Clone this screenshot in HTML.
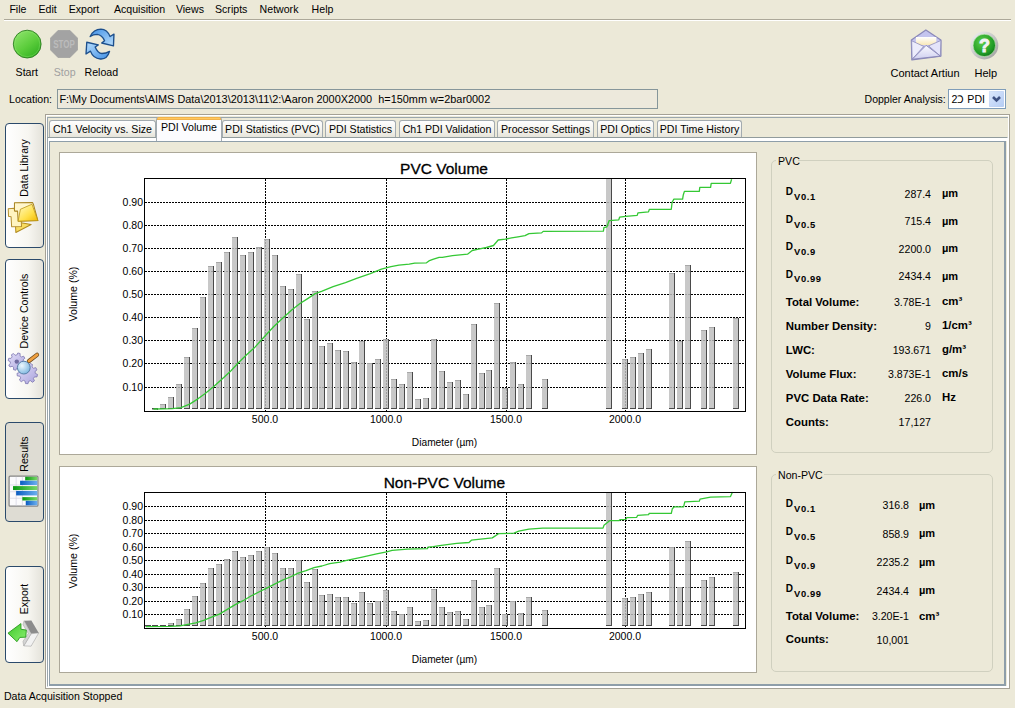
<!DOCTYPE html><html><head><meta charset="utf-8"><style>
html,body{margin:0;padding:0}
body{width:1015px;height:708px;overflow:hidden;position:relative;background:#ece9d8;font-family:"Liberation Sans", sans-serif}
.t{position:absolute;white-space:pre;line-height:1;font-family:"Liberation Sans", sans-serif}
.b{position:absolute}
</style></head><body>
<div class="t" style="left:9.40px;top:3.83px;font-size:10.6px;font-weight:normal;color:#000;">File</div>
<div class="t" style="left:38.50px;top:3.83px;font-size:10.6px;font-weight:normal;color:#000;">Edit</div>
<div class="t" style="left:68.70px;top:3.83px;font-size:10.6px;font-weight:normal;color:#000;">Export</div>
<div class="t" style="left:113.90px;top:3.83px;font-size:10.6px;font-weight:normal;color:#000;">Acquisition</div>
<div class="t" style="left:175.90px;top:3.83px;font-size:10.6px;font-weight:normal;color:#000;">Views</div>
<div class="t" style="left:215.00px;top:3.83px;font-size:10.6px;font-weight:normal;color:#000;">Scripts</div>
<div class="t" style="left:259.60px;top:3.83px;font-size:10.6px;font-weight:normal;color:#000;">Network</div>
<div class="t" style="left:311.60px;top:3.83px;font-size:10.6px;font-weight:normal;color:#000;">Help</div>
<div class="b" style="left:4px;top:19px;width:1007px;height:1px;background:#aca899"></div>
<div class="b" style="left:4px;top:20px;width:1007px;height:1px;background:#fff"></div>
<svg class="b" style="left:11px;top:28px" width="32" height="32" viewBox="0 0 32 32">
<defs><linearGradient id="gs" x1="0.2" y1="0.1" x2="0.8" y2="0.9"><stop offset="0" stop-color="#86e064"/><stop offset="0.55" stop-color="#5ccd3c"/><stop offset="1" stop-color="#36b424"/></linearGradient></defs>
<circle cx="16.2" cy="16.1" r="13.9" fill="url(#gs)" stroke="#2c7c20" stroke-width="0.9"/>
<circle cx="16.2" cy="16.1" r="12.6" fill="none" stroke="#9aea80" stroke-width="0.7" opacity="0.45"/>
</svg>
<svg class="b" style="left:50px;top:30px" width="28" height="28" viewBox="0 0 28 28">
<polygon points="8.2,0.3 19.8,0.3 27.7,8.2 27.7,19.8 19.8,27.7 8.2,27.7 0.3,19.8 0.3,8.2" fill="#a3a3a3" stroke="#9c9c9c" stroke-width="0.6" stroke-linejoin="round"/>
<text x="14" y="17.8" text-anchor="middle" font-family="Liberation Sans" font-weight="bold" font-size="10" fill="#bcbcbc" transform="translate(14 0) scale(0.8 1) translate(-14 0)">STOP</text>
</svg>
<svg class="b" style="left:80px;top:25px" width="45" height="37" viewBox="0 0 861 708">
<defs><linearGradient id="gr1" x1="0" y1="0" x2="1" y2="1"><stop offset="0" stop-color="#3f8fe6"/><stop offset="1" stop-color="#b9defc"/></linearGradient>
<linearGradient id="gr2" x1="0" y1="0" x2="1" y2="1"><stop offset="0" stop-color="#b9defc"/><stop offset="1" stop-color="#3f8fe6"/></linearGradient></defs>
<path d="M195 220 Q260 80 400 80 Q520 85 575 220 L650 175 L640 400 L415 345 L470 300 Q420 190 330 180 Q250 180 195 220 Z" fill="url(#gr1)" stroke="#1d4f8c" stroke-width="26" stroke-linejoin="round"/>
<path d="M565 505 Q520 660 390 650 Q250 640 200 500 L115 555 L130 330 L350 380 L290 420 Q340 540 420 545 Q500 545 565 505 Z" fill="url(#gr2)" stroke="#1d4f8c" stroke-width="26" stroke-linejoin="round"/>
</svg>
<div class="t" style="left:15.60px;top:66.63px;font-size:10.6px;font-weight:normal;color:#000;">Start</div>
<div class="t" style="left:53.80px;top:66.63px;font-size:10.6px;font-weight:normal;color:#a0a0a0;">Stop</div>
<div class="t" style="left:84.50px;top:66.63px;font-size:10.6px;font-weight:normal;color:#000;">Reload</div>
<svg class="b" style="left:906px;top:26px" width="40" height="38" viewBox="0 0 745 708">
<defs><linearGradient id="envb" x1="0" y1="0" x2="0" y2="1"><stop offset="0" stop-color="#fafaff"/><stop offset="1" stop-color="#cfcff0"/></linearGradient>
<linearGradient id="pap" x1="0" y1="0" x2="0" y2="1"><stop offset="0" stop-color="#ffffff"/><stop offset="1" stop-color="#f8e8b8"/></linearGradient></defs>
<polygon points="100,260 370,75 650,260 650,560 110,630" fill="#c4c4ee" stroke="#8a88b8" stroke-width="24" stroke-linejoin="round"/>
<rect x="185" y="205" width="380" height="150" fill="url(#pap)"/>
<polygon points="105,275 330,380 115,620" fill="#ececfc" stroke="#8a88b8" stroke-width="14" stroke-linejoin="round"/>
<polygon points="650,270 420,370 640,560" fill="#e4e4fa" stroke="#8a88b8" stroke-width="14" stroke-linejoin="round"/>
<polygon points="115,620 375,360 640,560" fill="url(#envb)" stroke="#8a88b8" stroke-width="18" stroke-linejoin="round"/>
</svg>
<svg class="b" style="left:969px;top:30px" width="31" height="31" viewBox="0 0 31 31">
<defs><radialGradient id="hg" cx="0.4" cy="0.35" r="0.75"><stop offset="0" stop-color="#5cd04a"/><stop offset="0.7" stop-color="#1f9a26"/><stop offset="1" stop-color="#0b6414"/></radialGradient>
<linearGradient id="hr" x1="0" y1="0" x2="1" y2="1"><stop offset="0" stop-color="#f4f4f4"/><stop offset="1" stop-color="#9c9c9c"/></linearGradient></defs>
<circle cx="15.3" cy="15.4" r="14" fill="url(#hr)"/>
<circle cx="15.3" cy="15.4" r="11.2" fill="url(#hg)" stroke="#c8f0c0" stroke-width="0.6"/>
<text x="15.4" y="21.6" text-anchor="middle" font-family="Liberation Sans" font-weight="bold" font-size="18" fill="#f2f2f2" stroke="#f2f2f2" stroke-width="0.9">?</text>
</svg>
<div class="t" style="left:890.50px;top:67.59px;font-size:11.0px;font-weight:normal;color:#000;">Contact Artiun</div>
<div class="t" style="left:974.50px;top:67.59px;font-size:11.0px;font-weight:normal;color:#000;">Help</div>
<div class="t" style="left:9.00px;top:94.03px;font-size:10.6px;font-weight:normal;color:#000;">Location:</div>
<div class="b" style="left:57px;top:89px;width:601px;height:20px;box-sizing:border-box;border:1px solid #86969a;background:#ede9dc"></div>
<div class="t" style="left:59.40px;top:93.77px;font-size:10.9px;font-weight:normal;color:#000;">F:\My Documents\AIMS Data\2013\2013\11\2:\Aaron 2000X2000&nbsp; h=150mm w=2bar0002</div>
<div class="t" style="left:864.60px;top:94.01px;font-size:10.5px;font-weight:normal;color:#000;">Doppler Analysis:</div>
<div class="b" style="left:948px;top:89px;width:58px;height:20px;box-sizing:border-box;border:1px solid #7f9db9;background:#fff"></div>
<div class="t" style="left:951.50px;top:93.93px;font-size:10.6px;font-weight:normal;color:#000;">2Ↄ PDI</div>
<svg class="b" style="left:989px;top:91px" width="15" height="16" viewBox="0 0 15 16">
<defs><linearGradient id="dd" x1="0" y1="0" x2="1" y2="1"><stop offset="0" stop-color="#dce8fc"/><stop offset="1" stop-color="#b4ccf4"/></linearGradient></defs>
<rect x="0" y="0" width="15" height="16" rx="1.5" fill="url(#dd)" stroke="#c0d0ee" stroke-width="0.6"/>
<path d="M4 6 L7.5 9.5 L11 6" fill="none" stroke="#3f5283" stroke-width="2.6"/>
</svg>
<div class="b" style="left:5px;top:123px;width:39px;height:125px;box-sizing:border-box;border:1px solid #2b4a6b;border-radius:4px;background:linear-gradient(90deg,#ffffff 0%,#f7f6f1 60%,#e4e2da 100%)"></div>
<svg class="b" style="left:4px;top:198px" width="40" height="40" viewBox="0 0 708 708">
<defs><linearGradient id="fd" x1="0" y1="0" x2="1" y2="1"><stop offset="0" stop-color="#fffbc8"/><stop offset="0.6" stop-color="#ffe04a"/><stop offset="1" stop-color="#f0b800"/></linearGradient></defs>
<polygon points="200,420 480,470 210,610" fill="#f8dc60" stroke="#b08a20" stroke-width="18" stroke-linejoin="round"/>
<polygon points="75,190 180,180 190,235 300,235 310,505 135,510 125,330 80,325" fill="#fff4c0" stroke="#b59030" stroke-width="18" stroke-linejoin="round"/>
<polygon points="185,85 505,80 520,110 600,400 250,410 240,230 185,225" fill="#fff6cc" stroke="#a88420" stroke-width="18" stroke-linejoin="round"/>
<polygon points="290,200 495,110 600,400 250,410" fill="url(#fd)" stroke="#b89010" stroke-width="14" stroke-linejoin="round"/>
</svg>
<div class="t" style="left:-35.5px;top:162px;width:120px;height:12px;font-size:10.6px;text-align:center;transform:rotate(-90deg);transform-origin:60px 6px">Data Library</div>
<div class="b" style="left:5px;top:259px;width:39px;height:140px;box-sizing:border-box;border:1px solid #2b4a6b;border-radius:4px;background:linear-gradient(90deg,#ffffff 0%,#f7f6f1 60%,#e4e2da 100%)"></div>
<svg class="b" style="left:6px;top:351px" width="34" height="34" viewBox="0 0 34 34">
<defs><linearGradient id="gg" x1="0" y1="0" x2="1" y2="1"><stop offset="0" stop-color="#e4e0fa"/><stop offset="1" stop-color="#aaa3dc"/></linearGradient>
<radialGradient id="mg" cx="0.35" cy="0.35" r="0.7"><stop offset="0" stop-color="#eef8ff"/><stop offset="1" stop-color="#7fb8e0"/></radialGradient></defs>
<path d="M17.40,10.60 L19.44,11.62 L18.84,13.93 L16.56,13.82 L15.47,15.27 L16.19,17.43 L14.13,18.64 L12.59,16.95 L10.80,17.20 L9.78,19.24 L7.47,18.64 L7.58,16.36 L6.13,15.27 L3.97,15.99 L2.76,13.93 L4.45,12.39 L4.20,10.60 L2.16,9.58 L2.76,7.27 L5.04,7.38 L6.13,5.93 L5.41,3.77 L7.47,2.56 L9.01,4.25 L10.80,4.00 L11.82,1.96 L14.13,2.56 L14.02,4.84 L15.47,5.93 L17.63,5.21 L18.84,7.27 L17.15,8.81 Z" fill="url(#gg)" stroke="#7c76b0" stroke-width="0.8"/>
<circle cx="10.8" cy="10.6" r="2.2" fill="#6f6aa0"/>
<path d="M29.30,22.40 L31.54,23.48 L30.98,25.92 L28.49,25.91 L27.43,27.54 L28.45,29.81 L26.45,31.32 L24.55,29.71 L22.69,30.28 L22.02,32.67 L19.51,32.54 L19.09,30.09 L17.30,29.33 L15.25,30.73 L13.41,29.02 L14.67,26.87 L13.78,25.14 L11.31,24.89 L11.00,22.40 L13.34,21.56 L13.78,19.66 L12.04,17.88 L13.41,15.78 L15.74,16.65 L17.30,15.47 L17.11,12.99 L19.51,12.26 L20.74,14.42 L22.69,14.52 L24.14,12.50 L26.45,13.48 L26.00,15.93 L27.43,17.26 L29.84,16.64 L30.98,18.88 L29.06,20.46 Z" fill="url(#gg)" stroke="#7c76b0" stroke-width="0.8"/>
<line x1="23" y1="10" x2="31" y2="3.8" stroke="#6b4a20" stroke-width="4.2" stroke-linecap="round"/>
<line x1="23" y1="10" x2="31" y2="3.8" stroke="#f0a040" stroke-width="2.8" stroke-linecap="round"/>
<circle cx="17.8" cy="16.6" r="6.4" fill="url(#mg)" stroke="#5a7fa8" stroke-width="1"/>
</svg>
<div class="t" style="left:-35.5px;top:305.4px;width:120px;height:12px;font-size:10.6px;text-align:center;transform:rotate(-90deg);transform-origin:60px 6px">Device Controls</div>
<div class="b" style="left:5px;top:422px;width:39px;height:100px;box-sizing:border-box;border:1px solid #2b4a6b;border-radius:4px;background:#dedcd3"></div>
<svg class="b" style="left:4px;top:470px" width="40" height="40" viewBox="0 0 708 708">
<defs><linearGradient id="rg" x1="0" y1="0" x2="1" y2="0"><stop offset="0" stop-color="#079810"/><stop offset="1" stop-color="#7ad86a"/></linearGradient>
<linearGradient id="rb" x1="0" y1="0" x2="1" y2="0"><stop offset="0" stop-color="#0a5cc0"/><stop offset="1" stop-color="#6cb0f0"/></linearGradient></defs>
<rect x="90" y="110" width="510" height="530" rx="18" fill="#fbfbfd" stroke="#858585" stroke-width="22"/>
<g stroke="#cfcfe0" stroke-width="12"><line x1="215" y1="120" x2="215" y2="630"/><line x1="325" y1="120" x2="325" y2="630"/><line x1="100" y1="265" x2="590" y2="265"/><line x1="100" y1="385" x2="590" y2="385"/><line x1="100" y1="500" x2="590" y2="500"/></g>
<rect x="375" y="120" width="215" height="65" fill="url(#rg)"/>
<rect x="285" y="190" width="305" height="75" fill="url(#rb)"/>
<rect x="160" y="285" width="430" height="70" fill="url(#rg)"/>
<rect x="215" y="370" width="375" height="80" fill="url(#rb)"/>
<rect x="325" y="480" width="265" height="60" fill="url(#rg)"/>
<rect x="385" y="545" width="205" height="80" fill="url(#rb)"/>
</svg>
<div class="t" style="left:-35.5px;top:448.4px;width:120px;height:12px;font-size:10.6px;text-align:center;transform:rotate(-90deg);transform-origin:60px 6px">Results</div>
<div class="b" style="left:5px;top:566px;width:39px;height:97px;box-sizing:border-box;border:1px solid #2b4a6b;border-radius:4px;background:linear-gradient(90deg,#ffffff 0%,#f7f6f1 60%,#e4e2da 100%)"></div>
<svg class="b" style="left:4px;top:612px" width="40" height="40" viewBox="0 0 708 708">
<defs><linearGradient id="eg" x1="0" y1="0" x2="1" y2="1"><stop offset="0" stop-color="#3fc82a"/><stop offset="1" stop-color="#8af070"/></linearGradient></defs>
<polygon points="355,155 485,150 615,370 480,385" fill="#8c8c8c"/>
<polygon points="480,385 615,370 480,605 350,600" fill="#f2f2f2" stroke="#a0a0a0" stroke-width="10"/>
<polygon points="355,155 480,385 350,600 335,520 430,380 335,225" fill="#d4d4d4" stroke="#9a9a9a" stroke-width="8"/>
<polygon points="70,375 300,205 300,305 395,320 385,445 280,450 230,525" fill="url(#eg)" stroke="#2a9a20" stroke-width="16" stroke-linejoin="round"/>
</svg>
<div class="t" style="left:-35.5px;top:592.7px;width:120px;height:12px;font-size:10.6px;text-align:center;transform:rotate(-90deg);transform-origin:60px 6px">Export</div>
<div class="b" style="left:45px;top:114px;width:965px;height:575px;box-sizing:border-box;border:1px solid #a5a195;border-right-color:#a5a195"></div>
<div class="b" style="left:46px;top:115px;width:963px;height:573px;box-sizing:border-box;border:1px solid #ffffff"></div>
<div class="b" style="left:47px;top:117px;width:961px;height:570px;box-sizing:border-box;border-top:1px solid #9aa6ad;border-left:1px solid #9aa6ad"></div>
<div class="b" style="left:47px;top:137px;width:961px;height:550px;box-sizing:border-box;border-top:1px solid #919b9c;border-left:1px solid #9aa6ad;border-right:1px solid #ffffff;border-bottom:1px solid #fff"></div>
<div class="b" style="left:48px;top:138px;width:959px;height:548px;box-sizing:border-box;border-top:3px solid #fff;border-left:1px solid #fff"></div>
<div class="b" style="left:49px;top:141px;width:957px;height:545px;box-sizing:border-box;border:1px solid #8e9ea9;border-right-width:2px;border-bottom-width:2px"></div>
<div class="b" style="left:49px;top:120px;width:107px;height:17px;box-sizing:border-box;border:1px solid #a3abb0;border-bottom:none;border-radius:3px 3px 0 0;background:linear-gradient(180deg,#fefefe 0%,#f3f2ec 60%,#e6e4da 100%)"></div>
<div class="t" style="left:-47.50px;width:300px;top:123.63px;font-size:10.6px;font-weight:normal;color:#000;text-align:center;">Ch1 Velocity vs. Size</div>
<div class="b" style="left:222px;top:120px;width:101px;height:17px;box-sizing:border-box;border:1px solid #a3abb0;border-bottom:none;border-radius:3px 3px 0 0;background:linear-gradient(180deg,#fefefe 0%,#f3f2ec 60%,#e6e4da 100%)"></div>
<div class="t" style="left:122.50px;width:300px;top:123.63px;font-size:10.6px;font-weight:normal;color:#000;text-align:center;">PDI Statistics (PVC)</div>
<div class="b" style="left:325px;top:120px;width:71px;height:17px;box-sizing:border-box;border:1px solid #a3abb0;border-bottom:none;border-radius:3px 3px 0 0;background:linear-gradient(180deg,#fefefe 0%,#f3f2ec 60%,#e6e4da 100%)"></div>
<div class="t" style="left:210.50px;width:300px;top:123.63px;font-size:10.6px;font-weight:normal;color:#000;text-align:center;">PDI Statistics</div>
<div class="b" style="left:399px;top:120px;width:96px;height:17px;box-sizing:border-box;border:1px solid #a3abb0;border-bottom:none;border-radius:3px 3px 0 0;background:linear-gradient(180deg,#fefefe 0%,#f3f2ec 60%,#e6e4da 100%)"></div>
<div class="t" style="left:297.00px;width:300px;top:123.63px;font-size:10.6px;font-weight:normal;color:#000;text-align:center;">Ch1 PDI Validation</div>
<div class="b" style="left:497px;top:120px;width:97px;height:17px;box-sizing:border-box;border:1px solid #a3abb0;border-bottom:none;border-radius:3px 3px 0 0;background:linear-gradient(180deg,#fefefe 0%,#f3f2ec 60%,#e6e4da 100%)"></div>
<div class="t" style="left:395.50px;width:300px;top:123.63px;font-size:10.6px;font-weight:normal;color:#000;text-align:center;">Processor Settings</div>
<div class="b" style="left:597px;top:120px;width:57px;height:17px;box-sizing:border-box;border:1px solid #a3abb0;border-bottom:none;border-radius:3px 3px 0 0;background:linear-gradient(180deg,#fefefe 0%,#f3f2ec 60%,#e6e4da 100%)"></div>
<div class="t" style="left:475.50px;width:300px;top:123.63px;font-size:10.6px;font-weight:normal;color:#000;text-align:center;">PDI Optics</div>
<div class="b" style="left:657px;top:120px;width:85px;height:17px;box-sizing:border-box;border:1px solid #a3abb0;border-bottom:none;border-radius:3px 3px 0 0;background:linear-gradient(180deg,#fefefe 0%,#f3f2ec 60%,#e6e4da 100%)"></div>
<div class="t" style="left:549.50px;width:300px;top:123.63px;font-size:10.6px;font-weight:normal;color:#000;text-align:center;">PDI Time History</div>
<div class="b" style="left:156px;top:117px;width:66px;height:24px;box-sizing:border-box;border:1px solid #a3abb0;border-bottom:none;border-radius:3px 3px 0 0;background:#fcfcfe"></div>
<div class="b" style="left:157px;top:117px;width:64px;height:3px;background:#f2b24a;border-radius:2px 2px 0 0"></div>
<div class="b" style="left:158px;top:118px;width:62px;height:1px;background:#ffc85e"></div>
<div class="t" style="left:39.00px;width:300px;top:121.83px;font-size:10.6px;font-weight:normal;color:#000;text-align:center;">PDI Volume</div>
<div class="b" style="left:59px;top:152px;width:698px;height:303px;box-sizing:border-box;border:1px solid #aca899;background:#fff"></div>
<div class="b" style="left:59px;top:466px;width:698px;height:207px;box-sizing:border-box;border:1px solid #aca899;background:#fff"></div>
<svg class="b" style="left:0;top:0" width="1015" height="708" viewBox="0 0 1015 708"><line x1="145" y1="387.5" x2="745" y2="387.5" stroke="#000" stroke-width="1" stroke-dasharray="2 1"/><line x1="145" y1="363.5" x2="745" y2="363.5" stroke="#000" stroke-width="1" stroke-dasharray="2 1"/><line x1="145" y1="340.5" x2="745" y2="340.5" stroke="#000" stroke-width="1" stroke-dasharray="2 1"/><line x1="145" y1="317.5" x2="745" y2="317.5" stroke="#000" stroke-width="1" stroke-dasharray="2 1"/><line x1="145" y1="294.5" x2="745" y2="294.5" stroke="#000" stroke-width="1" stroke-dasharray="2 1"/><line x1="145" y1="271.5" x2="745" y2="271.5" stroke="#000" stroke-width="1" stroke-dasharray="2 1"/><line x1="145" y1="248.5" x2="745" y2="248.5" stroke="#000" stroke-width="1" stroke-dasharray="2 1"/><line x1="145" y1="225.5" x2="745" y2="225.5" stroke="#000" stroke-width="1" stroke-dasharray="2 1"/><line x1="145" y1="202.5" x2="745" y2="202.5" stroke="#000" stroke-width="1" stroke-dasharray="2 1"/><line x1="265.5" y1="179" x2="265.5" y2="411" stroke="#000" stroke-width="1" stroke-dasharray="2 1"/><line x1="386.5" y1="179" x2="386.5" y2="411" stroke="#000" stroke-width="1" stroke-dasharray="2 1"/><line x1="506.5" y1="179" x2="506.5" y2="411" stroke="#000" stroke-width="1" stroke-dasharray="2 1"/><line x1="625.5" y1="179" x2="625.5" y2="411" stroke="#000" stroke-width="1" stroke-dasharray="2 1"/><rect x="152" y="409" width="6" height="1" fill="#bebebe" fill-opacity="0.84"/><rect x="152" y="409" width="5" height="1" fill="#a8a8a8"/><rect x="157" y="409" width="1" height="1" fill="#4a4a4a"/><rect x="152" y="408" width="6" height="1" fill="#4a4a4a"/><rect x="160" y="404" width="6" height="5" fill="#bebebe" fill-opacity="0.84"/><rect x="160" y="404" width="5" height="1" fill="#a8a8a8"/><rect x="165" y="404" width="1" height="5" fill="#4a4a4a"/><rect x="160" y="408" width="6" height="1" fill="#4a4a4a"/><rect x="168" y="397" width="6" height="12" fill="#bebebe" fill-opacity="0.84"/><rect x="168" y="397" width="5" height="1" fill="#a8a8a8"/><rect x="173" y="397" width="1" height="12" fill="#4a4a4a"/><rect x="168" y="408" width="6" height="1" fill="#4a4a4a"/><rect x="176" y="384" width="6" height="25" fill="#bebebe" fill-opacity="0.84"/><rect x="176" y="384" width="5" height="1" fill="#a8a8a8"/><rect x="181" y="384" width="1" height="25" fill="#4a4a4a"/><rect x="176" y="408" width="6" height="1" fill="#4a4a4a"/><rect x="184" y="357" width="6" height="52" fill="#bebebe" fill-opacity="0.84"/><rect x="184" y="357" width="5" height="1" fill="#a8a8a8"/><rect x="189" y="357" width="1" height="52" fill="#4a4a4a"/><rect x="184" y="408" width="6" height="1" fill="#4a4a4a"/><rect x="192" y="328" width="6" height="81" fill="#bebebe" fill-opacity="0.84"/><rect x="192" y="328" width="5" height="1" fill="#a8a8a8"/><rect x="197" y="328" width="1" height="81" fill="#4a4a4a"/><rect x="192" y="408" width="6" height="1" fill="#4a4a4a"/><rect x="200" y="297" width="6" height="112" fill="#bebebe" fill-opacity="0.84"/><rect x="200" y="297" width="5" height="1" fill="#a8a8a8"/><rect x="205" y="297" width="1" height="112" fill="#4a4a4a"/><rect x="200" y="408" width="6" height="1" fill="#4a4a4a"/><rect x="208" y="266" width="6" height="143" fill="#bebebe" fill-opacity="0.84"/><rect x="208" y="266" width="5" height="1" fill="#a8a8a8"/><rect x="213" y="266" width="1" height="143" fill="#4a4a4a"/><rect x="208" y="408" width="6" height="1" fill="#4a4a4a"/><rect x="216" y="262" width="6" height="147" fill="#bebebe" fill-opacity="0.84"/><rect x="216" y="262" width="5" height="1" fill="#a8a8a8"/><rect x="221" y="262" width="1" height="147" fill="#4a4a4a"/><rect x="216" y="408" width="6" height="1" fill="#4a4a4a"/><rect x="224" y="252" width="6" height="157" fill="#bebebe" fill-opacity="0.84"/><rect x="224" y="252" width="5" height="1" fill="#a8a8a8"/><rect x="229" y="252" width="1" height="157" fill="#4a4a4a"/><rect x="224" y="408" width="6" height="1" fill="#4a4a4a"/><rect x="232" y="237" width="6" height="172" fill="#bebebe" fill-opacity="0.84"/><rect x="232" y="237" width="5" height="1" fill="#a8a8a8"/><rect x="237" y="237" width="1" height="172" fill="#4a4a4a"/><rect x="232" y="408" width="6" height="1" fill="#4a4a4a"/><rect x="240" y="255" width="6" height="154" fill="#bebebe" fill-opacity="0.84"/><rect x="240" y="255" width="5" height="1" fill="#a8a8a8"/><rect x="245" y="255" width="1" height="154" fill="#4a4a4a"/><rect x="240" y="408" width="6" height="1" fill="#4a4a4a"/><rect x="248" y="252" width="6" height="157" fill="#bebebe" fill-opacity="0.84"/><rect x="248" y="252" width="5" height="1" fill="#a8a8a8"/><rect x="253" y="252" width="1" height="157" fill="#4a4a4a"/><rect x="248" y="408" width="6" height="1" fill="#4a4a4a"/><rect x="256" y="247" width="6" height="162" fill="#bebebe" fill-opacity="0.84"/><rect x="256" y="247" width="5" height="1" fill="#a8a8a8"/><rect x="261" y="247" width="1" height="162" fill="#4a4a4a"/><rect x="256" y="408" width="6" height="1" fill="#4a4a4a"/><rect x="264" y="239" width="6" height="170" fill="#bebebe" fill-opacity="0.84"/><rect x="264" y="239" width="5" height="1" fill="#a8a8a8"/><rect x="269" y="239" width="1" height="170" fill="#4a4a4a"/><rect x="264" y="408" width="6" height="1" fill="#4a4a4a"/><rect x="272" y="255" width="6" height="154" fill="#bebebe" fill-opacity="0.84"/><rect x="272" y="255" width="5" height="1" fill="#a8a8a8"/><rect x="277" y="255" width="1" height="154" fill="#4a4a4a"/><rect x="272" y="408" width="6" height="1" fill="#4a4a4a"/><rect x="280" y="286" width="6" height="123" fill="#bebebe" fill-opacity="0.84"/><rect x="280" y="286" width="5" height="1" fill="#a8a8a8"/><rect x="285" y="286" width="1" height="123" fill="#4a4a4a"/><rect x="280" y="408" width="6" height="1" fill="#4a4a4a"/><rect x="288" y="289" width="6" height="120" fill="#bebebe" fill-opacity="0.84"/><rect x="288" y="289" width="5" height="1" fill="#a8a8a8"/><rect x="293" y="289" width="1" height="120" fill="#4a4a4a"/><rect x="288" y="408" width="6" height="1" fill="#4a4a4a"/><rect x="296" y="274" width="6" height="135" fill="#bebebe" fill-opacity="0.84"/><rect x="296" y="274" width="5" height="1" fill="#a8a8a8"/><rect x="301" y="274" width="1" height="135" fill="#4a4a4a"/><rect x="296" y="408" width="6" height="1" fill="#4a4a4a"/><rect x="304" y="319" width="6" height="90" fill="#bebebe" fill-opacity="0.84"/><rect x="304" y="319" width="5" height="1" fill="#a8a8a8"/><rect x="309" y="319" width="1" height="90" fill="#4a4a4a"/><rect x="304" y="408" width="6" height="1" fill="#4a4a4a"/><rect x="312" y="291" width="6" height="118" fill="#bebebe" fill-opacity="0.84"/><rect x="312" y="291" width="5" height="1" fill="#a8a8a8"/><rect x="317" y="291" width="1" height="118" fill="#4a4a4a"/><rect x="312" y="408" width="6" height="1" fill="#4a4a4a"/><rect x="319" y="346" width="6" height="63" fill="#bebebe" fill-opacity="0.84"/><rect x="319" y="346" width="5" height="1" fill="#a8a8a8"/><rect x="324" y="346" width="1" height="63" fill="#4a4a4a"/><rect x="319" y="408" width="6" height="1" fill="#4a4a4a"/><rect x="327" y="343" width="6" height="66" fill="#bebebe" fill-opacity="0.84"/><rect x="327" y="343" width="5" height="1" fill="#a8a8a8"/><rect x="332" y="343" width="1" height="66" fill="#4a4a4a"/><rect x="327" y="408" width="6" height="1" fill="#4a4a4a"/><rect x="335" y="350" width="6" height="59" fill="#bebebe" fill-opacity="0.84"/><rect x="335" y="350" width="5" height="1" fill="#a8a8a8"/><rect x="340" y="350" width="1" height="59" fill="#4a4a4a"/><rect x="335" y="408" width="6" height="1" fill="#4a4a4a"/><rect x="343" y="351" width="6" height="58" fill="#bebebe" fill-opacity="0.84"/><rect x="343" y="351" width="5" height="1" fill="#a8a8a8"/><rect x="348" y="351" width="1" height="58" fill="#4a4a4a"/><rect x="343" y="408" width="6" height="1" fill="#4a4a4a"/><rect x="351" y="362" width="6" height="47" fill="#bebebe" fill-opacity="0.84"/><rect x="351" y="362" width="5" height="1" fill="#a8a8a8"/><rect x="356" y="362" width="1" height="47" fill="#4a4a4a"/><rect x="351" y="408" width="6" height="1" fill="#4a4a4a"/><rect x="359" y="341" width="6" height="68" fill="#bebebe" fill-opacity="0.84"/><rect x="359" y="341" width="5" height="1" fill="#a8a8a8"/><rect x="364" y="341" width="1" height="68" fill="#4a4a4a"/><rect x="359" y="408" width="6" height="1" fill="#4a4a4a"/><rect x="367" y="363" width="6" height="46" fill="#bebebe" fill-opacity="0.84"/><rect x="367" y="363" width="5" height="1" fill="#a8a8a8"/><rect x="372" y="363" width="1" height="46" fill="#4a4a4a"/><rect x="367" y="408" width="6" height="1" fill="#4a4a4a"/><rect x="375" y="359" width="6" height="50" fill="#bebebe" fill-opacity="0.84"/><rect x="375" y="359" width="5" height="1" fill="#a8a8a8"/><rect x="380" y="359" width="1" height="50" fill="#4a4a4a"/><rect x="375" y="408" width="6" height="1" fill="#4a4a4a"/><rect x="383" y="339" width="6" height="70" fill="#bebebe" fill-opacity="0.84"/><rect x="383" y="339" width="5" height="1" fill="#a8a8a8"/><rect x="388" y="339" width="1" height="70" fill="#4a4a4a"/><rect x="383" y="408" width="6" height="1" fill="#4a4a4a"/><rect x="391" y="379" width="6" height="30" fill="#bebebe" fill-opacity="0.84"/><rect x="391" y="379" width="5" height="1" fill="#a8a8a8"/><rect x="396" y="379" width="1" height="30" fill="#4a4a4a"/><rect x="391" y="408" width="6" height="1" fill="#4a4a4a"/><rect x="399" y="384" width="6" height="25" fill="#bebebe" fill-opacity="0.84"/><rect x="399" y="384" width="5" height="1" fill="#a8a8a8"/><rect x="404" y="384" width="1" height="25" fill="#4a4a4a"/><rect x="399" y="408" width="6" height="1" fill="#4a4a4a"/><rect x="407" y="372" width="6" height="37" fill="#bebebe" fill-opacity="0.84"/><rect x="407" y="372" width="5" height="1" fill="#a8a8a8"/><rect x="412" y="372" width="1" height="37" fill="#4a4a4a"/><rect x="407" y="408" width="6" height="1" fill="#4a4a4a"/><rect x="415" y="399" width="6" height="10" fill="#bebebe" fill-opacity="0.84"/><rect x="415" y="399" width="5" height="1" fill="#a8a8a8"/><rect x="420" y="399" width="1" height="10" fill="#4a4a4a"/><rect x="415" y="408" width="6" height="1" fill="#4a4a4a"/><rect x="423" y="398" width="6" height="11" fill="#bebebe" fill-opacity="0.84"/><rect x="423" y="398" width="5" height="1" fill="#a8a8a8"/><rect x="428" y="398" width="1" height="11" fill="#4a4a4a"/><rect x="423" y="408" width="6" height="1" fill="#4a4a4a"/><rect x="431" y="339" width="6" height="70" fill="#bebebe" fill-opacity="0.84"/><rect x="431" y="339" width="5" height="1" fill="#a8a8a8"/><rect x="436" y="339" width="1" height="70" fill="#4a4a4a"/><rect x="431" y="408" width="6" height="1" fill="#4a4a4a"/><rect x="439" y="371" width="6" height="38" fill="#bebebe" fill-opacity="0.84"/><rect x="439" y="371" width="5" height="1" fill="#a8a8a8"/><rect x="444" y="371" width="1" height="38" fill="#4a4a4a"/><rect x="439" y="408" width="6" height="1" fill="#4a4a4a"/><rect x="447" y="382" width="6" height="27" fill="#bebebe" fill-opacity="0.84"/><rect x="447" y="382" width="5" height="1" fill="#a8a8a8"/><rect x="452" y="382" width="1" height="27" fill="#4a4a4a"/><rect x="447" y="408" width="6" height="1" fill="#4a4a4a"/><rect x="455" y="380" width="6" height="29" fill="#bebebe" fill-opacity="0.84"/><rect x="455" y="380" width="5" height="1" fill="#a8a8a8"/><rect x="460" y="380" width="1" height="29" fill="#4a4a4a"/><rect x="455" y="408" width="6" height="1" fill="#4a4a4a"/><rect x="463" y="394" width="6" height="15" fill="#bebebe" fill-opacity="0.84"/><rect x="463" y="394" width="5" height="1" fill="#a8a8a8"/><rect x="468" y="394" width="1" height="15" fill="#4a4a4a"/><rect x="463" y="408" width="6" height="1" fill="#4a4a4a"/><rect x="471" y="324" width="6" height="85" fill="#bebebe" fill-opacity="0.84"/><rect x="471" y="324" width="5" height="1" fill="#a8a8a8"/><rect x="476" y="324" width="1" height="85" fill="#4a4a4a"/><rect x="471" y="408" width="6" height="1" fill="#4a4a4a"/><rect x="479" y="373" width="6" height="36" fill="#bebebe" fill-opacity="0.84"/><rect x="479" y="373" width="5" height="1" fill="#a8a8a8"/><rect x="484" y="373" width="1" height="36" fill="#4a4a4a"/><rect x="479" y="408" width="6" height="1" fill="#4a4a4a"/><rect x="486" y="370" width="6" height="39" fill="#bebebe" fill-opacity="0.84"/><rect x="486" y="370" width="5" height="1" fill="#a8a8a8"/><rect x="491" y="370" width="1" height="39" fill="#4a4a4a"/><rect x="486" y="408" width="6" height="1" fill="#4a4a4a"/><rect x="494" y="303" width="6" height="106" fill="#bebebe" fill-opacity="0.84"/><rect x="494" y="303" width="5" height="1" fill="#a8a8a8"/><rect x="499" y="303" width="1" height="106" fill="#4a4a4a"/><rect x="494" y="408" width="6" height="1" fill="#4a4a4a"/><rect x="502" y="388" width="6" height="21" fill="#bebebe" fill-opacity="0.84"/><rect x="502" y="388" width="5" height="1" fill="#a8a8a8"/><rect x="507" y="388" width="1" height="21" fill="#4a4a4a"/><rect x="502" y="408" width="6" height="1" fill="#4a4a4a"/><rect x="510" y="362" width="6" height="47" fill="#bebebe" fill-opacity="0.84"/><rect x="510" y="362" width="5" height="1" fill="#a8a8a8"/><rect x="515" y="362" width="1" height="47" fill="#4a4a4a"/><rect x="510" y="408" width="6" height="1" fill="#4a4a4a"/><rect x="518" y="384" width="6" height="25" fill="#bebebe" fill-opacity="0.84"/><rect x="518" y="384" width="5" height="1" fill="#a8a8a8"/><rect x="523" y="384" width="1" height="25" fill="#4a4a4a"/><rect x="518" y="408" width="6" height="1" fill="#4a4a4a"/><rect x="526" y="355" width="6" height="54" fill="#bebebe" fill-opacity="0.84"/><rect x="526" y="355" width="5" height="1" fill="#a8a8a8"/><rect x="531" y="355" width="1" height="54" fill="#4a4a4a"/><rect x="526" y="408" width="6" height="1" fill="#4a4a4a"/><rect x="542" y="379" width="6" height="30" fill="#bebebe" fill-opacity="0.84"/><rect x="542" y="379" width="5" height="1" fill="#a8a8a8"/><rect x="547" y="379" width="1" height="30" fill="#4a4a4a"/><rect x="542" y="408" width="6" height="1" fill="#4a4a4a"/><rect x="606" y="178" width="6" height="231" fill="#bebebe" fill-opacity="0.84"/><rect x="606" y="178" width="5" height="1" fill="#a8a8a8"/><rect x="611" y="178" width="1" height="231" fill="#4a4a4a"/><rect x="606" y="408" width="6" height="1" fill="#4a4a4a"/><rect x="622" y="359" width="6" height="50" fill="#bebebe" fill-opacity="0.84"/><rect x="622" y="359" width="5" height="1" fill="#a8a8a8"/><rect x="627" y="359" width="1" height="50" fill="#4a4a4a"/><rect x="622" y="408" width="6" height="1" fill="#4a4a4a"/><rect x="630" y="357" width="6" height="52" fill="#bebebe" fill-opacity="0.84"/><rect x="630" y="357" width="5" height="1" fill="#a8a8a8"/><rect x="635" y="357" width="1" height="52" fill="#4a4a4a"/><rect x="630" y="408" width="6" height="1" fill="#4a4a4a"/><rect x="638" y="353" width="6" height="56" fill="#bebebe" fill-opacity="0.84"/><rect x="638" y="353" width="5" height="1" fill="#a8a8a8"/><rect x="643" y="353" width="1" height="56" fill="#4a4a4a"/><rect x="638" y="408" width="6" height="1" fill="#4a4a4a"/><rect x="646" y="349" width="6" height="60" fill="#bebebe" fill-opacity="0.84"/><rect x="646" y="349" width="5" height="1" fill="#a8a8a8"/><rect x="651" y="349" width="1" height="60" fill="#4a4a4a"/><rect x="646" y="408" width="6" height="1" fill="#4a4a4a"/><rect x="669" y="273" width="6" height="136" fill="#bebebe" fill-opacity="0.84"/><rect x="669" y="273" width="5" height="1" fill="#a8a8a8"/><rect x="674" y="273" width="1" height="136" fill="#4a4a4a"/><rect x="669" y="408" width="6" height="1" fill="#4a4a4a"/><rect x="677" y="341" width="6" height="68" fill="#bebebe" fill-opacity="0.84"/><rect x="677" y="341" width="5" height="1" fill="#a8a8a8"/><rect x="682" y="341" width="1" height="68" fill="#4a4a4a"/><rect x="677" y="408" width="6" height="1" fill="#4a4a4a"/><rect x="685" y="265" width="6" height="144" fill="#bebebe" fill-opacity="0.84"/><rect x="685" y="265" width="5" height="1" fill="#a8a8a8"/><rect x="690" y="265" width="1" height="144" fill="#4a4a4a"/><rect x="685" y="408" width="6" height="1" fill="#4a4a4a"/><rect x="701" y="330" width="6" height="79" fill="#bebebe" fill-opacity="0.84"/><rect x="701" y="330" width="5" height="1" fill="#a8a8a8"/><rect x="706" y="330" width="1" height="79" fill="#4a4a4a"/><rect x="701" y="408" width="6" height="1" fill="#4a4a4a"/><rect x="709" y="327" width="6" height="82" fill="#bebebe" fill-opacity="0.84"/><rect x="709" y="327" width="5" height="1" fill="#a8a8a8"/><rect x="714" y="327" width="1" height="82" fill="#4a4a4a"/><rect x="709" y="408" width="6" height="1" fill="#4a4a4a"/><rect x="733" y="318" width="6" height="91" fill="#bebebe" fill-opacity="0.84"/><rect x="733" y="318" width="5" height="1" fill="#a8a8a8"/><rect x="738" y="318" width="1" height="91" fill="#4a4a4a"/><rect x="733" y="408" width="6" height="1" fill="#4a4a4a"/><polyline points="153.4,409.0 172.4,408.6 181.0,407.6 189.7,404.1 198.3,398.6 205.2,393.4 213.8,386.6 222.4,378.8 231.0,370.7 237.9,363.3 246.6,354.7 255.2,346.9 264.1,337.0 273.8,326.5 283.4,317.5 291.7,310.0 300.0,303.5 306.9,299.1 315.2,293.6 322.1,291.1 333.1,286.7 345.5,282.6 356.6,278.4 370.3,273.6 381.4,269.2 391.0,266.7 398.9,265.2 409.2,264.1 414.7,263.1 426.5,262.8 428.9,260.9 432.8,259.4 439.1,257.3 442.3,257.3 452.5,255.7 467.5,254.2 472.2,250.5 478.5,249.1 486.4,247.5 493.5,245.5 498.2,240.0 505.3,239.2 511.6,237.9 518.0,236.8 525.0,235.7 529.0,233.7 541.6,232.9 543.2,231.4 603.4,231.2 603.9,227.7 606.9,226.8 609.1,220.7 618.8,219.8 619.6,217.2 625.8,216.3 637.2,215.4 638.0,212.8 648.5,211.9 649.4,209.3 671.3,209.3 672.1,202.3 673.9,199.1 682.6,199.1 683.2,195.3 684.4,191.4 699.3,191.4 699.8,187.4 710.6,187.4 711.2,183.4 730.4,183.4 731.6,179.2" fill="none" stroke="#34c834" stroke-width="1.3" stroke-linejoin="round"/><rect x="144.5" y="178.5" width="601" height="233" fill="none" stroke="#000" stroke-width="1"/></svg>
<div class="t" style="right:872.00px;top:381.91px;font-size:10.5px;font-weight:normal;color:#000;text-align:right;">0.10</div>
<div class="t" style="right:872.00px;top:357.91px;font-size:10.5px;font-weight:normal;color:#000;text-align:right;">0.20</div>
<div class="t" style="right:872.00px;top:334.91px;font-size:10.5px;font-weight:normal;color:#000;text-align:right;">0.30</div>
<div class="t" style="right:872.00px;top:311.91px;font-size:10.5px;font-weight:normal;color:#000;text-align:right;">0.40</div>
<div class="t" style="right:872.00px;top:288.91px;font-size:10.5px;font-weight:normal;color:#000;text-align:right;">0.50</div>
<div class="t" style="right:872.00px;top:265.91px;font-size:10.5px;font-weight:normal;color:#000;text-align:right;">0.60</div>
<div class="t" style="right:872.00px;top:242.91px;font-size:10.5px;font-weight:normal;color:#000;text-align:right;">0.70</div>
<div class="t" style="right:872.00px;top:219.91px;font-size:10.5px;font-weight:normal;color:#000;text-align:right;">0.80</div>
<div class="t" style="right:872.00px;top:196.91px;font-size:10.5px;font-weight:normal;color:#000;text-align:right;">0.90</div>
<div class="t" style="left:115.00px;width:300px;top:413.51px;font-size:10.5px;font-weight:normal;color:#000;text-align:center;">500.0</div>
<div class="t" style="left:236.00px;width:300px;top:413.51px;font-size:10.5px;font-weight:normal;color:#000;text-align:center;">1000.0</div>
<div class="t" style="left:356.00px;width:300px;top:413.51px;font-size:10.5px;font-weight:normal;color:#000;text-align:center;">1500.0</div>
<div class="t" style="left:475.00px;width:300px;top:413.51px;font-size:10.5px;font-weight:normal;color:#000;text-align:center;">2000.0</div>
<div class="t" style="left:294.50px;width:300px;top:438.17px;font-size:10.2px;font-weight:normal;color:#000;text-align:center;">Diameter (µm)</div>
<div class="t" style="left:294.00px;width:300px;top:161.48px;font-size:15.5px;font-weight:normal;color:#000;text-align:center;-webkit-text-stroke:0.3px #000">PVC Volume</div>
<div class="t" style="left:13.799999999999997px;top:288px;width:120px;height:12px;font-size:10.6px;text-align:center;transform:rotate(-90deg);transform-origin:60px 6px">Volume (%)</div>
<svg class="b" style="left:0;top:0" width="1015" height="708" viewBox="0 0 1015 708"><line x1="145" y1="614.5" x2="745" y2="614.5" stroke="#000" stroke-width="1" stroke-dasharray="2 1"/><line x1="145" y1="601.5" x2="745" y2="601.5" stroke="#000" stroke-width="1" stroke-dasharray="2 1"/><line x1="145" y1="587.5" x2="745" y2="587.5" stroke="#000" stroke-width="1" stroke-dasharray="2 1"/><line x1="145" y1="574.5" x2="745" y2="574.5" stroke="#000" stroke-width="1" stroke-dasharray="2 1"/><line x1="145" y1="560.5" x2="745" y2="560.5" stroke="#000" stroke-width="1" stroke-dasharray="2 1"/><line x1="145" y1="547.5" x2="745" y2="547.5" stroke="#000" stroke-width="1" stroke-dasharray="2 1"/><line x1="145" y1="533.5" x2="745" y2="533.5" stroke="#000" stroke-width="1" stroke-dasharray="2 1"/><line x1="145" y1="520.5" x2="745" y2="520.5" stroke="#000" stroke-width="1" stroke-dasharray="2 1"/><line x1="145" y1="506.5" x2="745" y2="506.5" stroke="#000" stroke-width="1" stroke-dasharray="2 1"/><line x1="265.5" y1="493" x2="265.5" y2="628" stroke="#000" stroke-width="1" stroke-dasharray="2 1"/><line x1="386.5" y1="493" x2="386.5" y2="628" stroke="#000" stroke-width="1" stroke-dasharray="2 1"/><line x1="506.5" y1="493" x2="506.5" y2="628" stroke="#000" stroke-width="1" stroke-dasharray="2 1"/><line x1="625.5" y1="493" x2="625.5" y2="628" stroke="#000" stroke-width="1" stroke-dasharray="2 1"/><rect x="145" y="626" width="6" height="1" fill="#bebebe" fill-opacity="0.84"/><rect x="145" y="626" width="5" height="1" fill="#a8a8a8"/><rect x="150" y="626" width="1" height="1" fill="#4a4a4a"/><rect x="145" y="625" width="6" height="1" fill="#4a4a4a"/><rect x="152" y="626" width="6" height="1" fill="#bebebe" fill-opacity="0.84"/><rect x="152" y="626" width="5" height="1" fill="#a8a8a8"/><rect x="157" y="626" width="1" height="1" fill="#4a4a4a"/><rect x="152" y="625" width="6" height="1" fill="#4a4a4a"/><rect x="160" y="626" width="6" height="1" fill="#bebebe" fill-opacity="0.84"/><rect x="160" y="626" width="5" height="1" fill="#a8a8a8"/><rect x="165" y="626" width="1" height="1" fill="#4a4a4a"/><rect x="160" y="625" width="6" height="1" fill="#4a4a4a"/><rect x="168" y="623" width="6" height="3" fill="#bebebe" fill-opacity="0.84"/><rect x="168" y="623" width="5" height="1" fill="#a8a8a8"/><rect x="173" y="623" width="1" height="3" fill="#4a4a4a"/><rect x="168" y="625" width="6" height="1" fill="#4a4a4a"/><rect x="176" y="619" width="6" height="7" fill="#bebebe" fill-opacity="0.84"/><rect x="176" y="619" width="5" height="1" fill="#a8a8a8"/><rect x="181" y="619" width="1" height="7" fill="#4a4a4a"/><rect x="176" y="625" width="6" height="1" fill="#4a4a4a"/><rect x="184" y="609" width="6" height="17" fill="#bebebe" fill-opacity="0.84"/><rect x="184" y="609" width="5" height="1" fill="#a8a8a8"/><rect x="189" y="609" width="1" height="17" fill="#4a4a4a"/><rect x="184" y="625" width="6" height="1" fill="#4a4a4a"/><rect x="192" y="596" width="6" height="30" fill="#bebebe" fill-opacity="0.84"/><rect x="192" y="596" width="5" height="1" fill="#a8a8a8"/><rect x="197" y="596" width="1" height="30" fill="#4a4a4a"/><rect x="192" y="625" width="6" height="1" fill="#4a4a4a"/><rect x="200" y="583" width="6" height="43" fill="#bebebe" fill-opacity="0.84"/><rect x="200" y="583" width="5" height="1" fill="#a8a8a8"/><rect x="205" y="583" width="1" height="43" fill="#4a4a4a"/><rect x="200" y="625" width="6" height="1" fill="#4a4a4a"/><rect x="208" y="568" width="6" height="58" fill="#bebebe" fill-opacity="0.84"/><rect x="208" y="568" width="5" height="1" fill="#a8a8a8"/><rect x="213" y="568" width="1" height="58" fill="#4a4a4a"/><rect x="208" y="625" width="6" height="1" fill="#4a4a4a"/><rect x="216" y="564" width="6" height="62" fill="#bebebe" fill-opacity="0.84"/><rect x="216" y="564" width="5" height="1" fill="#a8a8a8"/><rect x="221" y="564" width="1" height="62" fill="#4a4a4a"/><rect x="216" y="625" width="6" height="1" fill="#4a4a4a"/><rect x="224" y="559" width="6" height="67" fill="#bebebe" fill-opacity="0.84"/><rect x="224" y="559" width="5" height="1" fill="#a8a8a8"/><rect x="229" y="559" width="1" height="67" fill="#4a4a4a"/><rect x="224" y="625" width="6" height="1" fill="#4a4a4a"/><rect x="232" y="551" width="6" height="75" fill="#bebebe" fill-opacity="0.84"/><rect x="232" y="551" width="5" height="1" fill="#a8a8a8"/><rect x="237" y="551" width="1" height="75" fill="#4a4a4a"/><rect x="232" y="625" width="6" height="1" fill="#4a4a4a"/><rect x="240" y="557" width="6" height="69" fill="#bebebe" fill-opacity="0.84"/><rect x="240" y="557" width="5" height="1" fill="#a8a8a8"/><rect x="245" y="557" width="1" height="69" fill="#4a4a4a"/><rect x="240" y="625" width="6" height="1" fill="#4a4a4a"/><rect x="248" y="555" width="6" height="71" fill="#bebebe" fill-opacity="0.84"/><rect x="248" y="555" width="5" height="1" fill="#a8a8a8"/><rect x="253" y="555" width="1" height="71" fill="#4a4a4a"/><rect x="248" y="625" width="6" height="1" fill="#4a4a4a"/><rect x="256" y="551" width="6" height="75" fill="#bebebe" fill-opacity="0.84"/><rect x="256" y="551" width="5" height="1" fill="#a8a8a8"/><rect x="261" y="551" width="1" height="75" fill="#4a4a4a"/><rect x="256" y="625" width="6" height="1" fill="#4a4a4a"/><rect x="264" y="547" width="6" height="79" fill="#bebebe" fill-opacity="0.84"/><rect x="264" y="547" width="5" height="1" fill="#a8a8a8"/><rect x="269" y="547" width="1" height="79" fill="#4a4a4a"/><rect x="264" y="625" width="6" height="1" fill="#4a4a4a"/><rect x="272" y="553" width="6" height="73" fill="#bebebe" fill-opacity="0.84"/><rect x="272" y="553" width="5" height="1" fill="#a8a8a8"/><rect x="277" y="553" width="1" height="73" fill="#4a4a4a"/><rect x="272" y="625" width="6" height="1" fill="#4a4a4a"/><rect x="280" y="568" width="6" height="58" fill="#bebebe" fill-opacity="0.84"/><rect x="280" y="568" width="5" height="1" fill="#a8a8a8"/><rect x="285" y="568" width="1" height="58" fill="#4a4a4a"/><rect x="280" y="625" width="6" height="1" fill="#4a4a4a"/><rect x="288" y="568" width="6" height="58" fill="#bebebe" fill-opacity="0.84"/><rect x="288" y="568" width="5" height="1" fill="#a8a8a8"/><rect x="293" y="568" width="1" height="58" fill="#4a4a4a"/><rect x="288" y="625" width="6" height="1" fill="#4a4a4a"/><rect x="296" y="560" width="6" height="66" fill="#bebebe" fill-opacity="0.84"/><rect x="296" y="560" width="5" height="1" fill="#a8a8a8"/><rect x="301" y="560" width="1" height="66" fill="#4a4a4a"/><rect x="296" y="625" width="6" height="1" fill="#4a4a4a"/><rect x="304" y="582" width="6" height="44" fill="#bebebe" fill-opacity="0.84"/><rect x="304" y="582" width="5" height="1" fill="#a8a8a8"/><rect x="309" y="582" width="1" height="44" fill="#4a4a4a"/><rect x="304" y="625" width="6" height="1" fill="#4a4a4a"/><rect x="312" y="569" width="6" height="57" fill="#bebebe" fill-opacity="0.84"/><rect x="312" y="569" width="5" height="1" fill="#a8a8a8"/><rect x="317" y="569" width="1" height="57" fill="#4a4a4a"/><rect x="312" y="625" width="6" height="1" fill="#4a4a4a"/><rect x="319" y="595" width="6" height="31" fill="#bebebe" fill-opacity="0.84"/><rect x="319" y="595" width="5" height="1" fill="#a8a8a8"/><rect x="324" y="595" width="1" height="31" fill="#4a4a4a"/><rect x="319" y="625" width="6" height="1" fill="#4a4a4a"/><rect x="327" y="594" width="6" height="32" fill="#bebebe" fill-opacity="0.84"/><rect x="327" y="594" width="5" height="1" fill="#a8a8a8"/><rect x="332" y="594" width="1" height="32" fill="#4a4a4a"/><rect x="327" y="625" width="6" height="1" fill="#4a4a4a"/><rect x="335" y="597" width="6" height="29" fill="#bebebe" fill-opacity="0.84"/><rect x="335" y="597" width="5" height="1" fill="#a8a8a8"/><rect x="340" y="597" width="1" height="29" fill="#4a4a4a"/><rect x="335" y="625" width="6" height="1" fill="#4a4a4a"/><rect x="343" y="597" width="6" height="29" fill="#bebebe" fill-opacity="0.84"/><rect x="343" y="597" width="5" height="1" fill="#a8a8a8"/><rect x="348" y="597" width="1" height="29" fill="#4a4a4a"/><rect x="343" y="625" width="6" height="1" fill="#4a4a4a"/><rect x="351" y="603" width="6" height="23" fill="#bebebe" fill-opacity="0.84"/><rect x="351" y="603" width="5" height="1" fill="#a8a8a8"/><rect x="356" y="603" width="1" height="23" fill="#4a4a4a"/><rect x="351" y="625" width="6" height="1" fill="#4a4a4a"/><rect x="359" y="592" width="6" height="34" fill="#bebebe" fill-opacity="0.84"/><rect x="359" y="592" width="5" height="1" fill="#a8a8a8"/><rect x="364" y="592" width="1" height="34" fill="#4a4a4a"/><rect x="359" y="625" width="6" height="1" fill="#4a4a4a"/><rect x="367" y="603" width="6" height="23" fill="#bebebe" fill-opacity="0.84"/><rect x="367" y="603" width="5" height="1" fill="#a8a8a8"/><rect x="372" y="603" width="1" height="23" fill="#4a4a4a"/><rect x="367" y="625" width="6" height="1" fill="#4a4a4a"/><rect x="375" y="601" width="6" height="25" fill="#bebebe" fill-opacity="0.84"/><rect x="375" y="601" width="5" height="1" fill="#a8a8a8"/><rect x="380" y="601" width="1" height="25" fill="#4a4a4a"/><rect x="375" y="625" width="6" height="1" fill="#4a4a4a"/><rect x="383" y="590" width="6" height="36" fill="#bebebe" fill-opacity="0.84"/><rect x="383" y="590" width="5" height="1" fill="#a8a8a8"/><rect x="388" y="590" width="1" height="36" fill="#4a4a4a"/><rect x="383" y="625" width="6" height="1" fill="#4a4a4a"/><rect x="391" y="611" width="6" height="15" fill="#bebebe" fill-opacity="0.84"/><rect x="391" y="611" width="5" height="1" fill="#a8a8a8"/><rect x="396" y="611" width="1" height="15" fill="#4a4a4a"/><rect x="391" y="625" width="6" height="1" fill="#4a4a4a"/><rect x="399" y="614" width="6" height="12" fill="#bebebe" fill-opacity="0.84"/><rect x="399" y="614" width="5" height="1" fill="#a8a8a8"/><rect x="404" y="614" width="1" height="12" fill="#4a4a4a"/><rect x="399" y="625" width="6" height="1" fill="#4a4a4a"/><rect x="407" y="607" width="6" height="19" fill="#bebebe" fill-opacity="0.84"/><rect x="407" y="607" width="5" height="1" fill="#a8a8a8"/><rect x="412" y="607" width="1" height="19" fill="#4a4a4a"/><rect x="407" y="625" width="6" height="1" fill="#4a4a4a"/><rect x="415" y="621" width="6" height="5" fill="#bebebe" fill-opacity="0.84"/><rect x="415" y="621" width="5" height="1" fill="#a8a8a8"/><rect x="420" y="621" width="1" height="5" fill="#4a4a4a"/><rect x="415" y="625" width="6" height="1" fill="#4a4a4a"/><rect x="423" y="620" width="6" height="6" fill="#bebebe" fill-opacity="0.84"/><rect x="423" y="620" width="5" height="1" fill="#a8a8a8"/><rect x="428" y="620" width="1" height="6" fill="#4a4a4a"/><rect x="423" y="625" width="6" height="1" fill="#4a4a4a"/><rect x="431" y="589" width="6" height="37" fill="#bebebe" fill-opacity="0.84"/><rect x="431" y="589" width="5" height="1" fill="#a8a8a8"/><rect x="436" y="589" width="1" height="37" fill="#4a4a4a"/><rect x="431" y="625" width="6" height="1" fill="#4a4a4a"/><rect x="439" y="607" width="6" height="19" fill="#bebebe" fill-opacity="0.84"/><rect x="439" y="607" width="5" height="1" fill="#a8a8a8"/><rect x="444" y="607" width="1" height="19" fill="#4a4a4a"/><rect x="439" y="625" width="6" height="1" fill="#4a4a4a"/><rect x="447" y="612" width="6" height="14" fill="#bebebe" fill-opacity="0.84"/><rect x="447" y="612" width="5" height="1" fill="#a8a8a8"/><rect x="452" y="612" width="1" height="14" fill="#4a4a4a"/><rect x="447" y="625" width="6" height="1" fill="#4a4a4a"/><rect x="455" y="611" width="6" height="15" fill="#bebebe" fill-opacity="0.84"/><rect x="455" y="611" width="5" height="1" fill="#a8a8a8"/><rect x="460" y="611" width="1" height="15" fill="#4a4a4a"/><rect x="455" y="625" width="6" height="1" fill="#4a4a4a"/><rect x="463" y="619" width="6" height="7" fill="#bebebe" fill-opacity="0.84"/><rect x="463" y="619" width="5" height="1" fill="#a8a8a8"/><rect x="468" y="619" width="1" height="7" fill="#4a4a4a"/><rect x="463" y="625" width="6" height="1" fill="#4a4a4a"/><rect x="471" y="580" width="6" height="46" fill="#bebebe" fill-opacity="0.84"/><rect x="471" y="580" width="5" height="1" fill="#a8a8a8"/><rect x="476" y="580" width="1" height="46" fill="#4a4a4a"/><rect x="471" y="625" width="6" height="1" fill="#4a4a4a"/><rect x="479" y="607" width="6" height="19" fill="#bebebe" fill-opacity="0.84"/><rect x="479" y="607" width="5" height="1" fill="#a8a8a8"/><rect x="484" y="607" width="1" height="19" fill="#4a4a4a"/><rect x="479" y="625" width="6" height="1" fill="#4a4a4a"/><rect x="486" y="605" width="6" height="21" fill="#bebebe" fill-opacity="0.84"/><rect x="486" y="605" width="5" height="1" fill="#a8a8a8"/><rect x="491" y="605" width="1" height="21" fill="#4a4a4a"/><rect x="486" y="625" width="6" height="1" fill="#4a4a4a"/><rect x="494" y="568" width="6" height="58" fill="#bebebe" fill-opacity="0.84"/><rect x="494" y="568" width="5" height="1" fill="#a8a8a8"/><rect x="499" y="568" width="1" height="58" fill="#4a4a4a"/><rect x="494" y="625" width="6" height="1" fill="#4a4a4a"/><rect x="502" y="614" width="6" height="12" fill="#bebebe" fill-opacity="0.84"/><rect x="502" y="614" width="5" height="1" fill="#a8a8a8"/><rect x="507" y="614" width="1" height="12" fill="#4a4a4a"/><rect x="502" y="625" width="6" height="1" fill="#4a4a4a"/><rect x="510" y="601" width="6" height="25" fill="#bebebe" fill-opacity="0.84"/><rect x="510" y="601" width="5" height="1" fill="#a8a8a8"/><rect x="515" y="601" width="1" height="25" fill="#4a4a4a"/><rect x="510" y="625" width="6" height="1" fill="#4a4a4a"/><rect x="518" y="613" width="6" height="13" fill="#bebebe" fill-opacity="0.84"/><rect x="518" y="613" width="5" height="1" fill="#a8a8a8"/><rect x="523" y="613" width="1" height="13" fill="#4a4a4a"/><rect x="518" y="625" width="6" height="1" fill="#4a4a4a"/><rect x="526" y="597" width="6" height="29" fill="#bebebe" fill-opacity="0.84"/><rect x="526" y="597" width="5" height="1" fill="#a8a8a8"/><rect x="531" y="597" width="1" height="29" fill="#4a4a4a"/><rect x="526" y="625" width="6" height="1" fill="#4a4a4a"/><rect x="542" y="610" width="6" height="16" fill="#bebebe" fill-opacity="0.84"/><rect x="542" y="610" width="5" height="1" fill="#a8a8a8"/><rect x="547" y="610" width="1" height="16" fill="#4a4a4a"/><rect x="542" y="625" width="6" height="1" fill="#4a4a4a"/><rect x="606" y="492" width="6" height="134" fill="#bebebe" fill-opacity="0.84"/><rect x="606" y="492" width="5" height="1" fill="#a8a8a8"/><rect x="611" y="492" width="1" height="134" fill="#4a4a4a"/><rect x="606" y="625" width="6" height="1" fill="#4a4a4a"/><rect x="622" y="598" width="6" height="28" fill="#bebebe" fill-opacity="0.84"/><rect x="622" y="598" width="5" height="1" fill="#a8a8a8"/><rect x="627" y="598" width="1" height="28" fill="#4a4a4a"/><rect x="622" y="625" width="6" height="1" fill="#4a4a4a"/><rect x="630" y="597" width="6" height="29" fill="#bebebe" fill-opacity="0.84"/><rect x="630" y="597" width="5" height="1" fill="#a8a8a8"/><rect x="635" y="597" width="1" height="29" fill="#4a4a4a"/><rect x="630" y="625" width="6" height="1" fill="#4a4a4a"/><rect x="638" y="594" width="6" height="32" fill="#bebebe" fill-opacity="0.84"/><rect x="638" y="594" width="5" height="1" fill="#a8a8a8"/><rect x="643" y="594" width="1" height="32" fill="#4a4a4a"/><rect x="638" y="625" width="6" height="1" fill="#4a4a4a"/><rect x="646" y="592" width="6" height="34" fill="#bebebe" fill-opacity="0.84"/><rect x="646" y="592" width="5" height="1" fill="#a8a8a8"/><rect x="651" y="592" width="1" height="34" fill="#4a4a4a"/><rect x="646" y="625" width="6" height="1" fill="#4a4a4a"/><rect x="669" y="547" width="6" height="79" fill="#bebebe" fill-opacity="0.84"/><rect x="669" y="547" width="5" height="1" fill="#a8a8a8"/><rect x="674" y="547" width="1" height="79" fill="#4a4a4a"/><rect x="669" y="625" width="6" height="1" fill="#4a4a4a"/><rect x="677" y="587" width="6" height="39" fill="#bebebe" fill-opacity="0.84"/><rect x="677" y="587" width="5" height="1" fill="#a8a8a8"/><rect x="682" y="587" width="1" height="39" fill="#4a4a4a"/><rect x="677" y="625" width="6" height="1" fill="#4a4a4a"/><rect x="685" y="541" width="6" height="85" fill="#bebebe" fill-opacity="0.84"/><rect x="685" y="541" width="5" height="1" fill="#a8a8a8"/><rect x="690" y="541" width="1" height="85" fill="#4a4a4a"/><rect x="685" y="625" width="6" height="1" fill="#4a4a4a"/><rect x="701" y="580" width="6" height="46" fill="#bebebe" fill-opacity="0.84"/><rect x="701" y="580" width="5" height="1" fill="#a8a8a8"/><rect x="706" y="580" width="1" height="46" fill="#4a4a4a"/><rect x="701" y="625" width="6" height="1" fill="#4a4a4a"/><rect x="709" y="577" width="6" height="49" fill="#bebebe" fill-opacity="0.84"/><rect x="709" y="577" width="5" height="1" fill="#a8a8a8"/><rect x="714" y="577" width="1" height="49" fill="#4a4a4a"/><rect x="709" y="625" width="6" height="1" fill="#4a4a4a"/><rect x="733" y="572" width="6" height="54" fill="#bebebe" fill-opacity="0.84"/><rect x="733" y="572" width="5" height="1" fill="#a8a8a8"/><rect x="738" y="572" width="1" height="54" fill="#4a4a4a"/><rect x="733" y="625" width="6" height="1" fill="#4a4a4a"/><polyline points="146.0,626.6 170.0,626.3 180.0,625.9 187.9,624.3 195.8,622.8 203.6,620.4 211.5,617.2 219.4,614.1 227.3,609.4 235.2,604.6 243.1,600.7 250.9,596.0 258.8,592.0 266.7,588.1 274.6,584.1 282.5,580.2 290.3,577.0 298.2,573.1 306.1,570.7 314.0,567.6 321.9,566.0 329.7,563.6 340.0,562.1 345.5,560.7 361.1,557.3 376.6,553.9 386.7,551.8 392.1,550.3 407.6,549.2 427.4,548.7 427.9,547.2 433.3,546.7 439.5,545.6 456.6,543.3 469.0,542.5 471.4,540.2 492.3,537.9 498.5,533.7 514.0,533.2 518.7,531.2 528.9,529.1 542.7,528.1 603.0,528.1 604.0,525.2 609.9,520.6 618.9,520.7 619.9,519.7 625.8,519.3 626.8,517.7 636.7,517.3 637.7,515.3 648.6,514.7 649.2,513.3 671.3,513.3 672.3,508.8 674.3,506.8 683.6,506.8 684.8,501.9 699.3,501.2 700.0,499.2 710.5,497.2 730.5,496.6 732.5,492.1" fill="none" stroke="#34c834" stroke-width="1.3" stroke-linejoin="round"/><rect x="144.5" y="492.5" width="601" height="136" fill="none" stroke="#000" stroke-width="1"/></svg>
<div class="t" style="right:872.00px;top:608.91px;font-size:10.5px;font-weight:normal;color:#000;text-align:right;">0.10</div>
<div class="t" style="right:872.00px;top:595.91px;font-size:10.5px;font-weight:normal;color:#000;text-align:right;">0.20</div>
<div class="t" style="right:872.00px;top:581.91px;font-size:10.5px;font-weight:normal;color:#000;text-align:right;">0.30</div>
<div class="t" style="right:872.00px;top:568.91px;font-size:10.5px;font-weight:normal;color:#000;text-align:right;">0.40</div>
<div class="t" style="right:872.00px;top:554.91px;font-size:10.5px;font-weight:normal;color:#000;text-align:right;">0.50</div>
<div class="t" style="right:872.00px;top:541.91px;font-size:10.5px;font-weight:normal;color:#000;text-align:right;">0.60</div>
<div class="t" style="right:872.00px;top:527.91px;font-size:10.5px;font-weight:normal;color:#000;text-align:right;">0.70</div>
<div class="t" style="right:872.00px;top:514.91px;font-size:10.5px;font-weight:normal;color:#000;text-align:right;">0.80</div>
<div class="t" style="right:872.00px;top:500.91px;font-size:10.5px;font-weight:normal;color:#000;text-align:right;">0.90</div>
<div class="t" style="left:115.00px;width:300px;top:630.81px;font-size:10.5px;font-weight:normal;color:#000;text-align:center;">500.0</div>
<div class="t" style="left:236.00px;width:300px;top:630.81px;font-size:10.5px;font-weight:normal;color:#000;text-align:center;">1000.0</div>
<div class="t" style="left:356.00px;width:300px;top:630.81px;font-size:10.5px;font-weight:normal;color:#000;text-align:center;">1500.0</div>
<div class="t" style="left:475.00px;width:300px;top:630.81px;font-size:10.5px;font-weight:normal;color:#000;text-align:center;">2000.0</div>
<div class="t" style="left:294.50px;width:300px;top:655.47px;font-size:10.2px;font-weight:normal;color:#000;text-align:center;">Diameter (µm)</div>
<div class="t" style="left:294.40px;width:300px;top:475.48px;font-size:15.5px;font-weight:normal;color:#000;text-align:center;-webkit-text-stroke:0.3px #000">Non-PVC Volume</div>
<div class="t" style="left:13.799999999999997px;top:555px;width:120px;height:12px;font-size:10.6px;text-align:center;transform:rotate(-90deg);transform-origin:60px 6px">Volume (%)</div>
<div class="b" style="left:771px;top:160px;width:222px;height:293px;box-sizing:border-box;border:1px solid #d0d0bf;border-radius:5px"></div>
<div class="b" style="left:776px;top:157px;width:22px;height:6px;background:#ece9d8"></div>
<div class="t" style="left:778.00px;top:155.53px;font-size:10.6px;font-weight:normal;color:#000;">PVC</div>
<div class="b" style="left:771px;top:474px;width:222px;height:198px;box-sizing:border-box;border:1px solid #d0d0bf;border-radius:5px"></div>
<div class="b" style="left:776px;top:471px;width:48px;height:6px;background:#ece9d8"></div>
<div class="t" style="left:778.00px;top:469.53px;font-size:10.6px;font-weight:normal;color:#000;">Non-PVC</div>
<div class="t" style="left:785.80px;top:187.34px;font-size:10px;font-weight:bold;color:#000;">D</div>
<div class="t" style="left:794.10px;top:192.14px;font-size:9.4px;font-weight:bold;color:#000;letter-spacing:0.6px">V0.1</div>
<div class="t" style="right:84.00px;top:188.83px;font-size:10.6px;font-weight:normal;color:#000;text-align:right;">287.4</div>
<div class="t" style="left:942.00px;top:188.49px;font-size:11px;font-weight:bold;color:#000;">µm</div>
<div class="t" style="left:785.80px;top:214.74px;font-size:10px;font-weight:bold;color:#000;">D</div>
<div class="t" style="left:794.10px;top:219.54px;font-size:9.4px;font-weight:bold;color:#000;letter-spacing:0.6px">V0.5</div>
<div class="t" style="right:84.00px;top:216.23px;font-size:10.6px;font-weight:normal;color:#000;text-align:right;">715.4</div>
<div class="t" style="left:942.00px;top:215.89px;font-size:11px;font-weight:bold;color:#000;">µm</div>
<div class="t" style="left:785.80px;top:242.14px;font-size:10px;font-weight:bold;color:#000;">D</div>
<div class="t" style="left:794.10px;top:246.94px;font-size:9.4px;font-weight:bold;color:#000;letter-spacing:0.6px">V0.9</div>
<div class="t" style="right:84.00px;top:243.63px;font-size:10.6px;font-weight:normal;color:#000;text-align:right;">2200.0</div>
<div class="t" style="left:942.00px;top:243.29px;font-size:11px;font-weight:bold;color:#000;">µm</div>
<div class="t" style="left:785.80px;top:269.54px;font-size:10px;font-weight:bold;color:#000;">D</div>
<div class="t" style="left:794.10px;top:274.34px;font-size:9.4px;font-weight:bold;color:#000;letter-spacing:0.6px">V0.99</div>
<div class="t" style="right:84.00px;top:271.03px;font-size:10.6px;font-weight:normal;color:#000;text-align:right;">2434.4</div>
<div class="t" style="left:942.00px;top:270.69px;font-size:11px;font-weight:bold;color:#000;">µm</div>
<div class="t" style="left:785.80px;top:297.15px;font-size:11.4px;font-weight:bold;color:#000;">Total Volume:</div>
<div class="t" style="right:84.00px;top:297.03px;font-size:10.6px;font-weight:normal;color:#000;text-align:right;">3.78E-1</div>
<div class="t" style="left:942.00px;top:296.35px;font-size:11.4px;font-weight:bold;color:#000;">cm³</div>
<div class="t" style="left:785.80px;top:321.15px;font-size:11.4px;font-weight:bold;color:#000;">Number Density:</div>
<div class="t" style="right:84.00px;top:321.03px;font-size:10.6px;font-weight:normal;color:#000;text-align:right;">9</div>
<div class="t" style="left:942.00px;top:320.35px;font-size:11.4px;font-weight:bold;color:#000;">1/cm³</div>
<div class="t" style="left:785.80px;top:345.15px;font-size:11.4px;font-weight:bold;color:#000;">LWC:</div>
<div class="t" style="right:84.00px;top:345.03px;font-size:10.6px;font-weight:normal;color:#000;text-align:right;">193.671</div>
<div class="t" style="left:942.00px;top:344.35px;font-size:11.4px;font-weight:bold;color:#000;">g/m³</div>
<div class="t" style="left:785.80px;top:369.15px;font-size:11.4px;font-weight:bold;color:#000;">Volume Flux:</div>
<div class="t" style="right:84.00px;top:369.03px;font-size:10.6px;font-weight:normal;color:#000;text-align:right;">3.873E-1</div>
<div class="t" style="left:942.00px;top:368.35px;font-size:11.4px;font-weight:bold;color:#000;">cm/s</div>
<div class="t" style="left:785.80px;top:393.15px;font-size:11.4px;font-weight:bold;color:#000;">PVC Data Rate:</div>
<div class="t" style="right:84.00px;top:393.03px;font-size:10.6px;font-weight:normal;color:#000;text-align:right;">226.0</div>
<div class="t" style="left:942.00px;top:392.35px;font-size:11.4px;font-weight:bold;color:#000;">Hz</div>
<div class="t" style="left:785.80px;top:417.15px;font-size:11.4px;font-weight:bold;color:#000;">Counts:</div>
<div class="t" style="right:84.00px;top:417.03px;font-size:10.6px;font-weight:normal;color:#000;text-align:right;">17,127</div>
<div class="t" style="left:942.00px;top:416.35px;font-size:11.4px;font-weight:bold;color:#000;"></div>
<div class="t" style="left:785.80px;top:498.74px;font-size:10px;font-weight:bold;color:#000;">D</div>
<div class="t" style="left:794.10px;top:503.54px;font-size:9.4px;font-weight:bold;color:#000;letter-spacing:0.6px">V0.1</div>
<div class="t" style="right:106.00px;top:500.23px;font-size:10.6px;font-weight:normal;color:#000;text-align:right;">316.8</div>
<div class="t" style="left:919.00px;top:499.89px;font-size:11px;font-weight:bold;color:#000;">µm</div>
<div class="t" style="left:785.80px;top:527.24px;font-size:10px;font-weight:bold;color:#000;">D</div>
<div class="t" style="left:794.10px;top:532.04px;font-size:9.4px;font-weight:bold;color:#000;letter-spacing:0.6px">V0.5</div>
<div class="t" style="right:106.00px;top:528.73px;font-size:10.6px;font-weight:normal;color:#000;text-align:right;">858.9</div>
<div class="t" style="left:919.00px;top:528.39px;font-size:11px;font-weight:bold;color:#000;">µm</div>
<div class="t" style="left:785.80px;top:555.74px;font-size:10px;font-weight:bold;color:#000;">D</div>
<div class="t" style="left:794.10px;top:560.54px;font-size:9.4px;font-weight:bold;color:#000;letter-spacing:0.6px">V0.9</div>
<div class="t" style="right:106.00px;top:557.23px;font-size:10.6px;font-weight:normal;color:#000;text-align:right;">2235.2</div>
<div class="t" style="left:919.00px;top:556.89px;font-size:11px;font-weight:bold;color:#000;">µm</div>
<div class="t" style="left:785.80px;top:584.24px;font-size:10px;font-weight:bold;color:#000;">D</div>
<div class="t" style="left:794.10px;top:589.04px;font-size:9.4px;font-weight:bold;color:#000;letter-spacing:0.6px">V0.99</div>
<div class="t" style="right:106.00px;top:585.73px;font-size:10.6px;font-weight:normal;color:#000;text-align:right;">2434.4</div>
<div class="t" style="left:919.00px;top:585.39px;font-size:11px;font-weight:bold;color:#000;">µm</div>
<div class="t" style="left:785.80px;top:610.65px;font-size:11.4px;font-weight:bold;color:#000;">Total Volume:</div>
<div class="t" style="right:106.00px;top:611.33px;font-size:10.6px;font-weight:normal;color:#000;text-align:right;">3.20E-1</div>
<div class="t" style="left:919.00px;top:610.65px;font-size:11.4px;font-weight:bold;color:#000;">cm³</div>
<div class="t" style="left:785.80px;top:634.05px;font-size:11.4px;font-weight:bold;color:#000;">Counts:</div>
<div class="t" style="right:106.00px;top:634.73px;font-size:10.6px;font-weight:normal;color:#000;text-align:right;">10,001</div>
<div class="t" style="left:919.00px;top:634.05px;font-size:11.4px;font-weight:bold;color:#000;"></div>
<div class="t" style="left:3.90px;top:691.43px;font-size:10.6px;font-weight:normal;color:#000;">Data Acquisition Stopped</div>
</body></html>
